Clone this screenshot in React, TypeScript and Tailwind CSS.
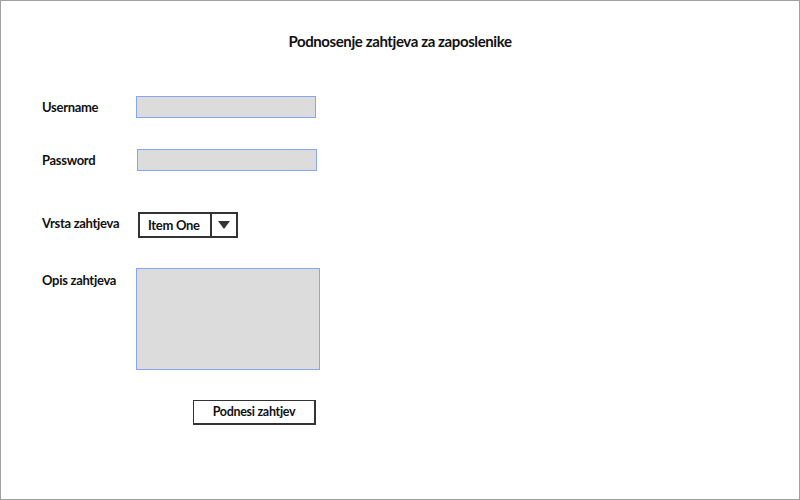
import React from "react";

export default function App() {
  const font = { fontFamily: "Lato, 'Open Sans', sans-serif" };
  return (
    <div
      className="w-[800px] h-[500px] box-border border border-[#a0a0a0] bg-white text-[#111] overflow-hidden"
      style={font}
    >
      <div className="pt-[30px] h-[20px] box-content text-center text-[15px] tracking-[-0.4px] font-bold leading-[20px]">
        Podnosenje zahtjeva za zaposlenike
      </div>
      <div className="pl-[41px] flex flex-col">
        <div className="mt-[45px] flex items-center h-[22px]">
          <div className="w-[94px] text-[13px] tracking-[-0.3px] font-bold mt-[1px]">Username</div>
          <div className="w-[180px] h-[22px] box-border border border-[#86a6f5] bg-[#dcdcdc]" />
        </div>
        <div className="mt-[31px] flex items-center h-[22px]">
          <div className="w-[95px] text-[13px] tracking-[-0.3px] font-bold mt-[1px]">Password</div>
          <div className="w-[180px] h-[22px] box-border border border-[#86a6f5] bg-[#dcdcdc]" />
        </div>
        <div className="mt-[41px] flex items-center h-[26px]">
          <div className="w-[96px] text-[13px] tracking-[-0.3px] font-bold -mt-[3px]">Vrsta zahtjeva</div>
          <div className="w-[100px] h-[26px] box-border border-2 border-[#333] flex">
            <div className="w-[72px] box-border border-r-2 border-[#333] text-[13px] tracking-[-0.3px] font-bold pl-[8px] leading-[22px]">
              Item One
            </div>
            <div className="flex-1 flex items-center justify-center">
              <svg width="12" height="10" viewBox="0 0 12 10">
                <polygon points="0,1 12,1 6,9" fill="#333" />
              </svg>
            </div>
          </div>
        </div>
        <div className="mt-[30px] flex items-start">
          <div className="w-[94px] text-[13px] tracking-[-0.3px] font-bold mt-[3px]">Opis zahtjeva</div>
          <div className="w-[184px] h-[102px] box-border border border-[#86a6f5] bg-[#dcdcdc]" />
        </div>
        <div className="mt-[30px] ml-[151px] w-[123px] h-[25px] box-border border border-[#333] border-r-2 border-b-2 flex items-center justify-center text-[12.5px] tracking-[-0.3px] font-bold">
          Podnesi zahtjev
        </div>
      </div>
    </div>
  );
}
